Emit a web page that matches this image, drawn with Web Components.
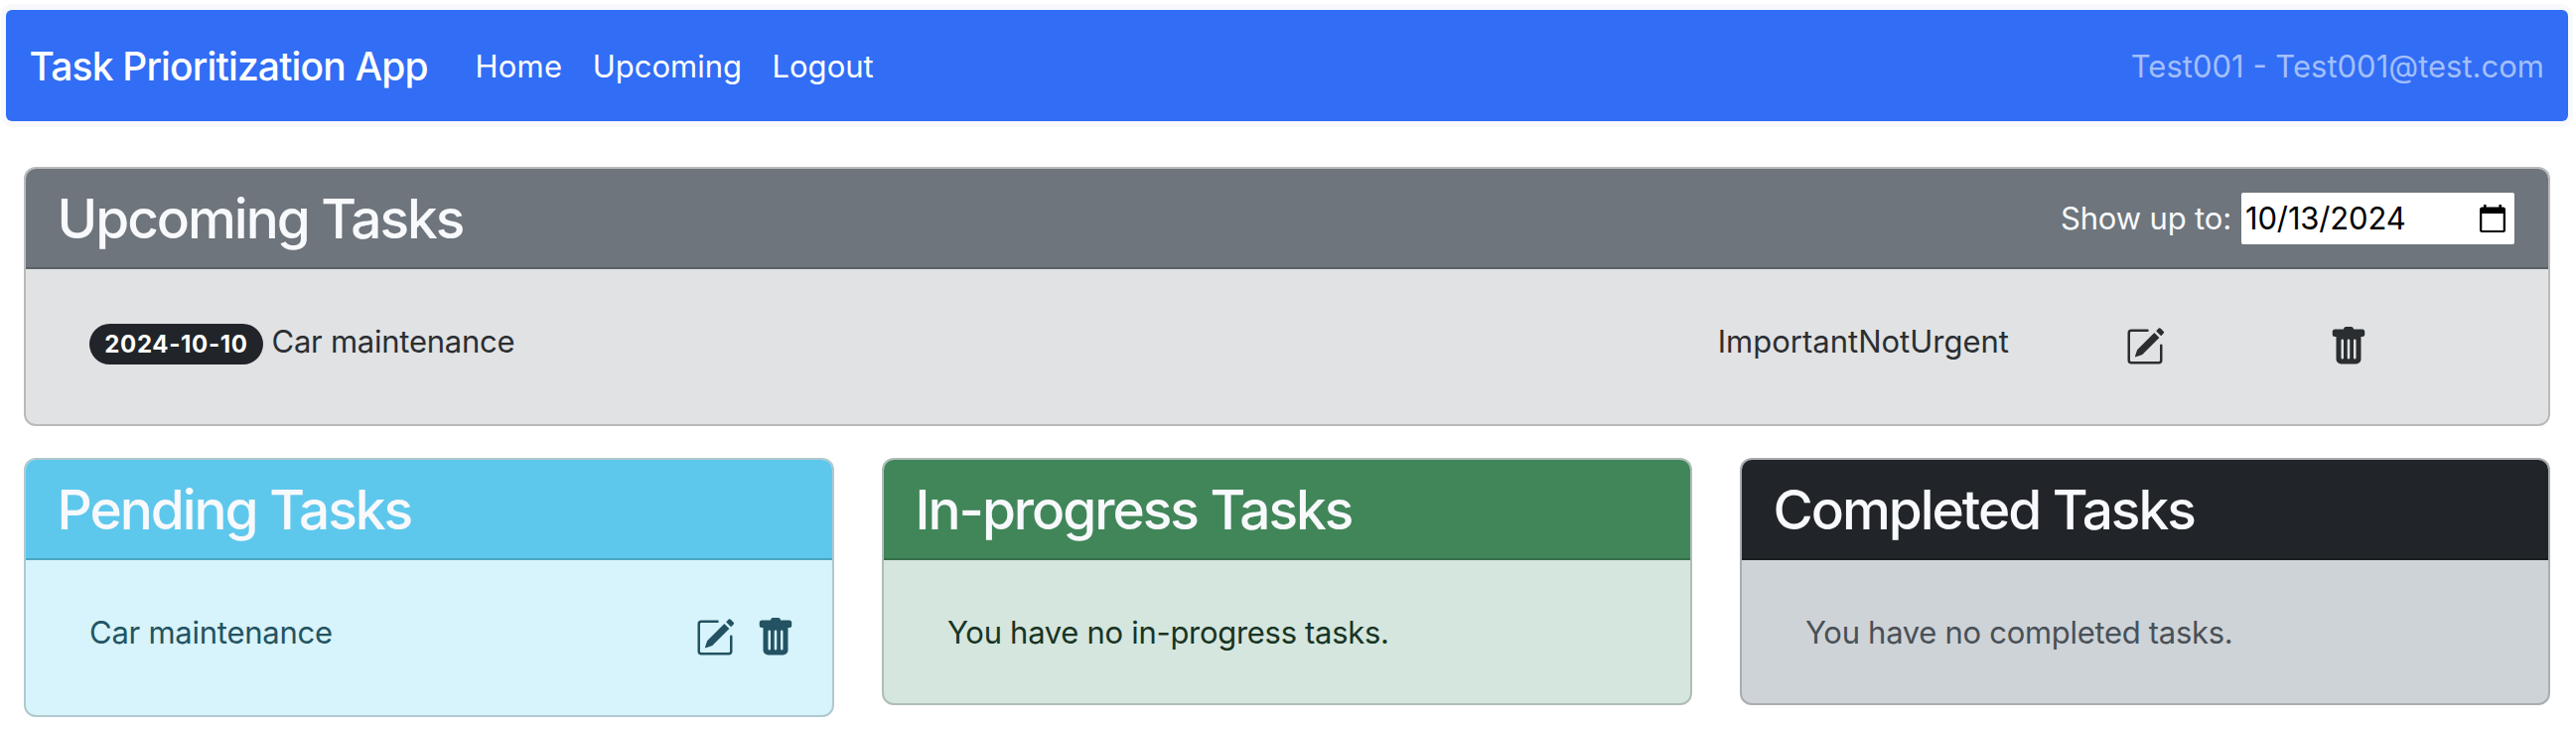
<!DOCTYPE html>
<html lang="en">
<head>
<meta charset="utf-8">
<title>Task Prioritization App</title>
<style>
  body { margin: 0; background: #fff; font-family: Inter, "Liberation Sans", sans-serif; font-size: 31px; line-height: 48px; }
</style>
</head>
<body>
<task-app></task-app>

<script>
const define = (name, html) => {
  const tpl = document.createElement('template');
  tpl.innerHTML = html;
  customElements.define(name, class extends HTMLElement {
    constructor() {
      super();
      this.attachShadow({ mode: 'open' }).append(tpl.content.cloneNode(true));
    }
  });
};

define('icon-edit', `
  <style>:host{display:block;width:40px;height:40px} svg{display:block}</style>
  <svg width="40" height="40" viewBox="0 0 16 16" fill="currentColor">
    <path d="M15.502 1.94a.5.5 0 0 1 0 .706L14.459 3.69l-2-2L13.502.646a.5.5 0 0 1 .707 0l1.293 1.293zm-1.75 2.456-2-2L4.939 9.21a.5.5 0 0 0-.121.196l-.805 2.414a.25.25 0 0 0 .316.316l2.414-.805a.5.5 0 0 0 .196-.12l6.813-6.814z"/>
    <path fill-rule="evenodd" d="M1 13.5A1.5 1.5 0 0 0 2.5 15h11a1.5 1.5 0 0 0 1.5-1.5v-6a.5.5 0 0 0-1 0v6a.5.5 0 0 1-.5.5h-11a.5.5 0 0 1-.5-.5v-11a.5.5 0 0 1 .5-.5H9a.5.5 0 0 0 0-1H2.5A1.5 1.5 0 0 0 1 2.5v11z"/>
  </svg>`);

define('icon-trash', `
  <style>:host{display:block;width:40px;height:40px} svg{display:block}</style>
  <svg width="40" height="40" viewBox="0 0 16 16" fill="currentColor">
    <path d="M2.5 1a1 1 0 0 0-1 1v1a1 1 0 0 0 1 1H3v9a2 2 0 0 0 2 2h6a2 2 0 0 0 2-2V4h.5a1 1 0 0 0 1-1V2a1 1 0 0 0-1-1H10a1 1 0 0 0-1-1H7a1 1 0 0 0-1 1H2.5zm3 4a.5.5 0 0 1 .5.5v7a.5.5 0 0 1-1 0v-7a.5.5 0 0 1 .5-.5zM8 5a.5.5 0 0 1 .5.5v7a.5.5 0 0 1-1 0v-7A.5.5 0 0 1 8 5zm3 .5v7a.5.5 0 0 1-1 0v-7a.5.5 0 0 1 1 0z"/>
  </svg>`);

define('app-navbar', `
  <style>
    :host { display: block; background: #f8f9fc; border-radius: 12px; padding: 6px 5px; }
    nav { display: flex; align-items: center; height: 112px; box-sizing: border-box;
          padding: 1px 24px 0; border-radius: 6px; background: #316df5; color: #fff; white-space: nowrap; }
    .brand { font-size: 39px; font-weight: 500; letter-spacing: -.85px; width: 449px; line-height: 60px; margin-left: -.5px; }
    .links { display: flex; gap: 30.5px; }
    .home { letter-spacing: .2px; }
    .user { margin-left: auto; color: #a3bffb; }
  </style>
  <nav>
    <span class="brand">Task Prioritization App</span>
    <div class="links"><span class="home">Home</span><span>Upcoming</span><span>Logout</span></div>
    <span class="user">Test001 - Test001@test.com</span>
  </nav>`);

define('task-card', `
  <style>
    :host { display: block; box-sizing: border-box; border: 2px solid rgba(0,0,0,.176); border-radius: 12px;
            background: var(--body); background-clip: border-box; color: var(--ink); overflow: hidden; }
    header { display: flex; align-items: center; justify-content: space-between; box-sizing: border-box;
             height: 101px; padding: 1px 34px 0 31.5px; background: var(--head); color: #f8f9fc;
             border-bottom: 2px solid rgba(0,0,0,.176); white-space: nowrap; }
    h2 { margin: 0; font-size: 55px; line-height: 66px; font-weight: 500; letter-spacing: -2.04px; }
    .body { padding: 49px 64px 47px; }
  </style>
  <header><h2><slot name="title"></slot></h2><slot name="tools"></slot></header>
  <div class="body"><slot></slot></div>`);

define('date-field', `
  <style>
    :host { display: flex; align-items: center; font-size: 31px; letter-spacing: -.15px; }
    .box { display: flex; align-items: center; justify-content: space-between; box-sizing: border-box;
           width: 275.5px; height: 52px; margin-left: 9.5px; padding: 0 9px 0 4.5px; border-radius: 2px;
           background: #fff; color: #000; }
    svg { display: block; }
  </style>
  <span><slot></slot></span>
  <div class="box"><span>10/13/2024</span>
    <svg width="26" height="28" viewBox="0 0 26 28">
      <path d="M4 0h2.6v3H4zM19.4 0H22v3h-2.6z"/>
      <path fill-rule="evenodd" d="M2.5 2.6h21A2.5 2.5 0 0 1 26 5.1v20.4a2.5 2.5 0 0 1-2.5 2.5h-21A2.5 2.5 0 0 1 0 25.5V5.1a2.5 2.5 0 0 1 2.5-2.5zM2.3 9v16.9h21.4V9z"/>
    </svg>
  </div>`);

define('task-row', `
  <style>
    :host { display: flex; height: 60px; align-items: flex-start; white-space: nowrap; letter-spacing: -.25px; }
    .name { flex: 1; }
    .icons { display: flex; gap: 21px; padding-top: 9px; margin-right: -27px; }
    :host([wide]) .icons { gap: 165px; margin-right: 117px; }
    .tag { letter-spacing: 0; margin-right: 117px; }
  </style>
  <slot name="badge"></slot>
  <span class="name"><slot></slot></span>
  <span class="tag"><slot name="tag"></slot></span>
  <div class="icons"><icon-edit></icon-edit><icon-trash></icon-trash></div>`);

define('date-badge', `
  <style>
    :host { display: block; box-sizing: border-box; height: 41px; width: 175px; margin: 6px 8.5px 0 0;
            border-radius: 21px; background: #212529; color: #fff; text-align: center;
            font-size: 24px; font-weight: 700; line-height: 41px; letter-spacing: .65px; }
  </style><slot></slot>`);

define('task-app', `
  <style>
    :host { display: block; padding: 4px 3px 0 1px; }
    main { display: grid; gap: 32px; padding: 40px 23px 0; }
    .cols { display: grid; grid-template-columns: repeat(3, 816px); justify-content: space-between; align-items: start; }
    .upcoming { --head: #6e757c; --body: #e1e2e4; --ink: #2b2e31; }
    .pending { --head: #5ec8ec; --body: #d7f3fb; --ink: #235362; }
    .progress { --head: #418659; --body: #d5e6de; --ink: #183424; }
    .completed { --head: #212529; --body: #ced3d7; --ink: #495057; }
    p { margin: 0; letter-spacing: -.3px; white-space: nowrap; }
  </style>
  <app-navbar></app-navbar>
  <main>
    <task-card class="upcoming">
      <span slot="title">Upcoming Tasks</span>
      <date-field slot="tools">Show up to:</date-field>
      <task-row wide><date-badge slot="badge">2024-10-10</date-badge>Car maintenance<span slot="tag">ImportantNotUrgent</span></task-row>
    </task-card>
    <div class="cols">
      <task-card class="pending"><span slot="title">Pending Tasks</span><task-row>Car maintenance</task-row></task-card>
      <task-card class="progress"><span slot="title">In-progress Tasks</span><p>You have no in-progress tasks.</p></task-card>
      <task-card class="completed"><span slot="title">Completed Tasks</span><p>You have no completed tasks.</p></task-card>
    </div>
  </main>`);
</script>
</body>
</html>
